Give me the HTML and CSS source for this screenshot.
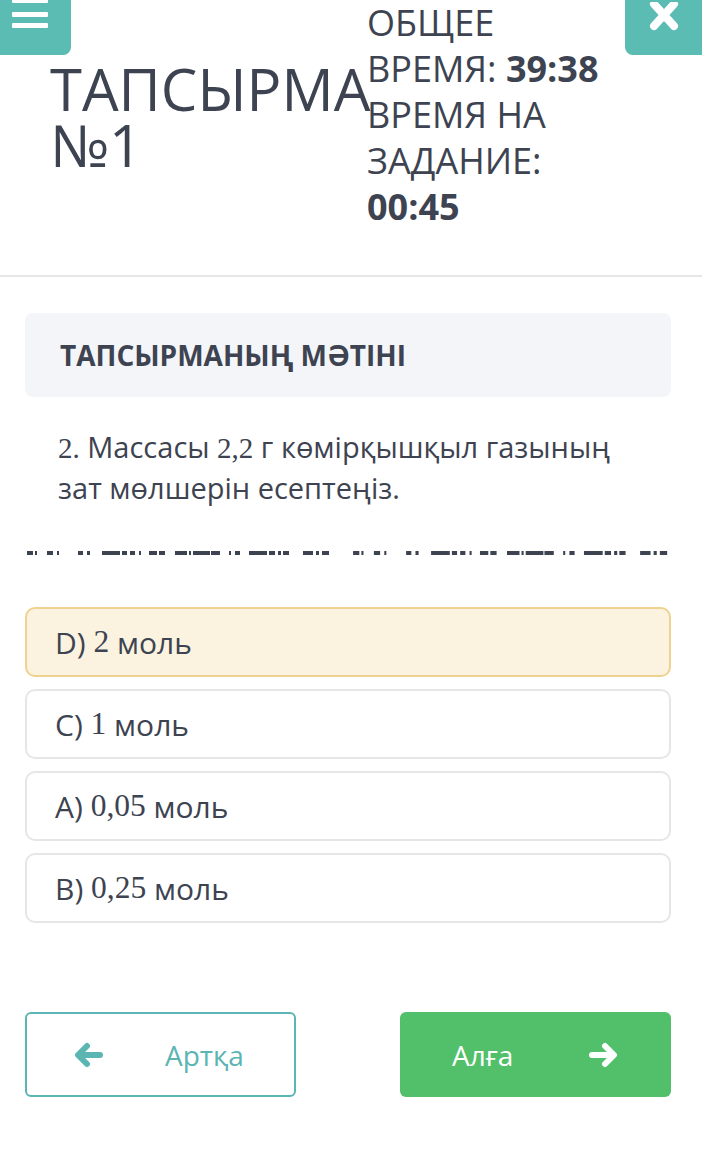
FILE: index.html
```html
<!DOCTYPE html>
<html lang="kk">
<head>
    <meta charset="UTF-8">
    <meta name="viewport" content="width=device-width, initial-scale=1.0">
    <title>Тапсырма №1</title>
    <link rel="stylesheet" href="styles.css">
</head>
<body>

    <!-- Бүйір батырмалары -->
    <button class="menu-btn" aria-label="Меню">
        <svg width="36" height="30" viewBox="0 0 36 30">
            <rect x="0" y="-2" width="36" height="5" rx="1" fill="#fff"/>
            <rect x="0" y="12" width="36" height="5" rx="1" fill="#fff"/>
            <rect x="0" y="23" width="36" height="5" rx="1" fill="#fff"/>
        </svg>
    </button>
    <button class="close-btn" aria-label="Жабу">
        <svg width="32" height="32" viewBox="0 0 32 32">
            <path d="M6 2 L26 24 M26 2 L6 24" stroke="#fff" stroke-width="8" stroke-linecap="round"/>
        </svg>
    </button>

    <header class="header">
        <h1 class="title">ТАПСЫРМА №1</h1>
        <div class="timer">
            ОБЩЕЕ ВРЕМЯ: <b>39:38</b>
            ВРЕМЯ НА ЗАДАНИЕ: <b>00:45</b>
        </div>
    </header>

    <main class="content">
        <div class="panel">ТАПСЫРМАНЫҢ МӘТІНІ</div>

        <p class="question"><span class="num">2.</span> Массасы <span class="num">2,2</span> г көмірқышқыл газының зат мөлшерін есептеңіз.</p>

        <svg class="dashes" width="646" height="4" viewBox="0 0 646 4">
            <g id="dash" fill="#3d4350">
                <rect x="2" width="6" height="4"/><rect x="10" width="2" height="4"/>
                <rect x="22" width="6" height="4"/><rect x="32" width="2" height="4"/>
                <rect x="53" width="5" height="4"/><rect x="62" width="3" height="4"/>
                <rect x="77" width="18" height="4"/><rect x="97" width="5" height="4"/>
                <rect x="105" width="5" height="4"/><rect x="114" width="2" height="4"/>
                <rect x="124" width="8" height="4"/><rect x="134" width="6" height="4"/>
                <rect x="150" width="12" height="4"/><rect x="164" width="2" height="4"/>
                <rect x="168" width="17" height="4"/><rect x="186" width="9" height="4"/>
                <rect x="204" width="2" height="4"/><rect x="210" width="5" height="4"/>
                <rect x="224" width="18" height="4"/><rect x="244" width="6" height="4"/>
                <rect x="253" width="3" height="4"/><rect x="258" width="6" height="4"/>
                <rect x="278" width="10" height="4"/><rect x="291" width="3" height="4"/>
                <rect x="297" width="7" height="4"/>
            </g>
            <use href="#dash" transform="translate(326) scale(1.04 1)"/>
        </svg>

        <div class="options">
            <div class="option selected">D) <span class="num">2</span> моль</div>
            <div class="option">C) <span class="num">1</span> моль</div>
            <div class="option">A) <span class="num">0,05</span> моль</div>
            <div class="option">B) <span class="num">0,25</span> моль</div>
        </div>

        <div class="nav">
            <button class="btn btn-back">
                <svg width="30" height="26" viewBox="0 0 30 26">
                    <path d="M27 13 H6 M14 4 L5 13 L14 22" fill="none" stroke="#5bb5b3" stroke-width="6" stroke-linecap="round" stroke-linejoin="round"/>
                </svg>
                <span>Артқа</span>
            </button>
            <button class="btn btn-next">
                <span>Алға</span>
                <svg width="30" height="26" viewBox="0 0 30 26">
                    <path d="M3 13 H24 M16 4 L25 13 L16 22" fill="none" stroke="#fff" stroke-width="6" stroke-linecap="round" stroke-linejoin="round"/>
                </svg>
            </button>
        </div>
    </main>

</body>
</html>
```

FILE: styles.css
```css
body {
    margin: 0;
    font-family: "Open Sans", Arial, sans-serif;
    color: #3d4350;
    background: #fff;
}
.menu-btn,
.close-btn {
    position: absolute;
    top: 0;
    height: 55px;
    border: none;
    padding: 0;
    background-color: #5bbcb4;
    display: flex;
    align-items: flex-start;
}
.menu-btn {
    left: 0;
    width: 71px;
    padding-left: 12px;
    justify-content: flex-start;
    border-radius: 0 0 8px 0;
}
.close-btn {
    right: 0;
    width: 77px;
    justify-content: center;
    border-radius: 0 0 0 8px;
}
.close-btn svg {
    margin-top: 2px;
}
.header {
    display: flex;
    align-items: flex-start;
    padding-left: 50px;
    height: 275px;
    border-bottom: 2px solid #e6e6e6;
}
.title {
    margin: 61px 0 0 0;
    width: 317px;
    flex: none;
    font-size: 58px;
    line-height: 56px;
    font-weight: 400;
}
.timer {
    width: 250px;
    font-size: 36px;
    line-height: 46px;
}
.timer b {
    font-weight: 700;
}
.content {
    padding: 36px 31px 0 25px;
}
.panel {
    height: 84px;
    display: flex;
    align-items: center;
    padding-left: 35px;
    background-color: #f3f5f9;
    border-radius: 8px;
    font-size: 28px;
    font-weight: 700;
}
.question {
    margin: 30px 0 0 0;
    padding-left: 33px;
    max-width: 580px;
    font-size: 29px;
    line-height: 39px;
}
.num {
    font-family: "Liberation Serif", "Times New Roman", serif;
}
.option .num {
    font-size: 1.05em;
}
.dashes {
    display: block;
    margin-top: 44px;
}
.options {
    margin-top: 52px;
    display: flex;
    flex-direction: column;
    gap: 12px;
}
.option {
    height: 66px;
    display: flex;
    align-items: center;
    padding-left: 28px;
    border: 2px solid #e6e6e6;
    border-radius: 10px;
    font-size: 30px;
    white-space: pre;
}
.option.selected {
    background-color: #fbf3e0;
    border-color: #eed28f;
}
.nav {
    margin-top: 89px;
    display: flex;
    justify-content: space-between;
}
.btn {
    width: 271px;
    height: 85px;
    border-radius: 6px;
    font-family: "Open Sans", Arial, sans-serif;
    font-size: 28px;
    display: flex;
    align-items: center;
    cursor: pointer;
}
.btn-back {
    background: #fff;
    border: 2px solid #5bb5b3;
    color: #5bb5b3;
    padding-left: 46px;
    gap: 62px;
}
.btn-next {
    background: #52c06a;
    border: none;
    color: #fff;
    padding-left: 52px;
    gap: 76px;
}
```
